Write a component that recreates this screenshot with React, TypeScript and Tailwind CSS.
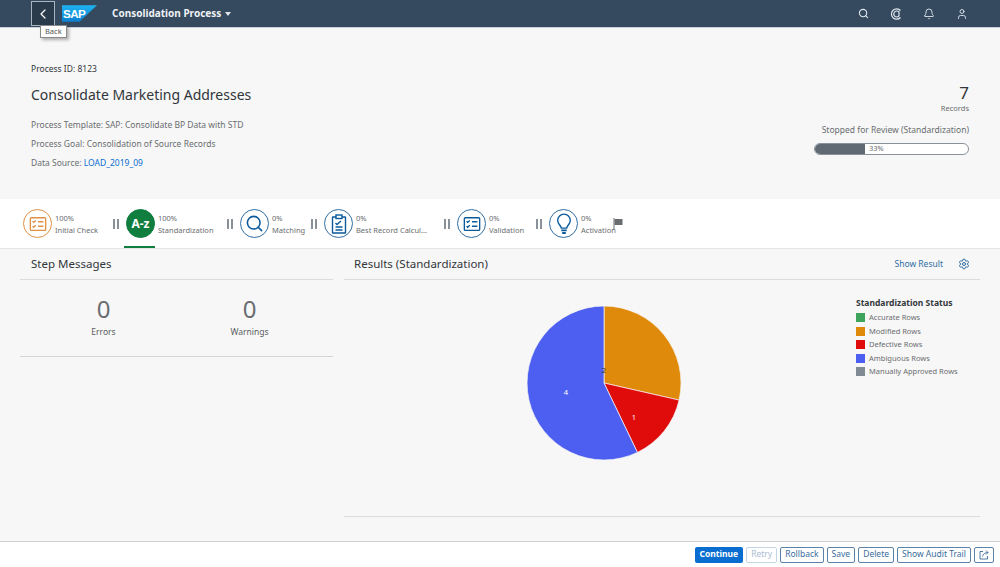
import { Bell, ChevronLeft, Search, Settings, User } from 'lucide-react';

const font = { fontFamily: '"Noto Sans", "Open Sans", sans-serif' };

type Step = { pct: string; label: string; icon: React.ReactNode; active?: boolean; done?: boolean; w: string };

function IconCheckList({ color }: { color: string }) {
  return (
    <svg viewBox="0 0 20 20" className="h-[18px] w-[18px]" fill="none" stroke={color} strokeWidth="1.5">
      <rect x="1.5" y="3" width="17" height="14" rx="1" />
      <path d="M4 7l1.2 1.2L7.5 6M4 12.5l1.2 1.2 2.3-2.2M10 7.5h6M10 12.5h6" />
    </svg>
  );
}

function IconClipboard() {
  return (
    <svg viewBox="0 0 20 20" className="h-[20px] w-[20px]" fill="none" stroke="#0a5a9c" strokeWidth="1.4">
      <rect x="3.5" y="3" width="13" height="16" rx="0.5" />
      <rect x="7" y="1" width="6" height="3.5" fill="#fff" />
      <path d="M6.5 9l1.5 1.5L12 7M6.5 13h7M6.5 16h7" />
    </svg>
  );
}

function IconBulb() {
  return (
    <svg viewBox="0 0 20 24" className="h-[22px] w-[18px]" fill="none" stroke="#0a5a9c" strokeWidth="1.5">
      <path d="M7 16.5C6.5 13.5 3 12 3 8a7 7 0 0 1 14 0c0 4-3.500 5.500-4 8.500z" />
      <path d="M7 19h6M8 22h4" strokeWidth="2" />
    </svg>
  );
}

const steps: Step[] = [
  { pct: '100%', label: 'Initial Check', done: true, w: 'w-[83px]', icon: <IconCheckList color="#e09146" /> },
  { pct: '100%', label: 'Standardization', active: true, w: 'w-[94px]', icon: <span className="text-[12px] font-bold text-white">A-z</span> },
  { pct: '0%', label: 'Matching', w: 'w-[64px]', icon: <Search size={19} color="#0a5a9c" strokeWidth={2} /> },
  { pct: '0%', label: 'Best Record Calcul...', w: 'w-[113px]', icon: <IconClipboard /> },
  { pct: '0%', label: 'Validation', w: 'w-[72px]', icon: <IconCheckList color="#0a5a9c" /> },
  { pct: '0%', label: 'Activation', w: 'w-[63px]', icon: <IconBulb /> },
];

function StepItem({ step }: { step: Step }) {
  const ring = step.active
    ? 'border-[#107e3e] bg-[#107e3e]'
    : step.done
      ? 'border-[#e09146]'
      : 'border-[#2f6da3]';
  return (
    <div className={`relative flex h-full shrink-0 items-center gap-[3px] ${step.w}`}>
      <div className={`flex h-[29px] w-[29px] shrink-0 items-center justify-center rounded-full border ${ring}`}>
        {step.icon}
      </div>
      <div className="whitespace-nowrap pt-px text-[7.5px] leading-[12px] text-[#6a6d70]">
        <p>{step.pct}</p>
        <p>{step.label}</p>
      </div>
      {step.active && <span className="absolute bottom-0 left-[-2px] h-[2px] w-[31px] bg-[#107e3e]" />}
    </div>
  );
}

function Pause() {
  return (
    <div className="flex w-[20px] shrink-0 justify-center gap-[2px]">
      <span className="h-[10px] w-[2px] bg-[#89919a]" />
      <span className="h-[10px] w-[2px] bg-[#89919a]" />
    </div>
  );
}

function Pie() {
  return (
    <svg viewBox="0 0 156 156" className="h-[156px] w-[156px]">
      <path d="M78 78V1A77 77 0 0 1 153.100 95.100Z" fill="#e08a0c" stroke="#f7f7f7" strokeWidth="0.7" />
      <path d="M78 78L153.100 95.100A77 77 0 0 1 111.400 147.400Z" fill="#e00b0b" stroke="#f7f7f7" strokeWidth="0.7" />
      <path d="M78 78L111.400 147.400A77 77 0 1 1 78 1Z" fill="#4d5ff0" stroke="#f7f7f7" strokeWidth="0.7" />
      <text x="78" y="68" textAnchor="middle" fontSize="7.500" fill="#333">2</text>
      <text x="108" y="115" textAnchor="middle" fontSize="7.500" fill="#fff">1</text>
      <text x="40" y="90" textAnchor="middle" fontSize="7.500" fill="#fff">4</text>
    </svg>
  );
}

const legend = [
  { label: 'Accurate Rows', color: 'bg-[#3fa45b]' },
  { label: 'Modified Rows', color: 'bg-[#e08a0c]' },
  { label: 'Defective Rows', color: 'bg-[#e00b0b]' },
  { label: 'Ambiguous Rows', color: 'bg-[#4d5ff0]' },
  { label: 'Manually Approved Rows', color: 'bg-[#7f8a94]' },
];

const buttons = ['Rollback', 'Save', 'Delete', 'Show Audit Trail'];

export default function App() {
  return (
    <div className="flex h-[567px] w-[1000px] flex-col overflow-hidden bg-[#f7f7f7]" style={font}>
      <header className="flex h-[28px] shrink-0 items-center border-b border-b-[#c9d0d8] bg-[#354a5f] pl-[31px] pr-[32px]">
        <div className="relative mr-[7px] flex h-[25px] w-[24px] items-center justify-center border border-[#aab4bf] bg-[#2a3b4c]">
          <ChevronLeft size={16} color="#fff" strokeWidth={1.8} />
          <span className="absolute left-[8px] top-[23px] z-10 border border-[#8a8a8a] bg-white px-[4px] text-[7.5px] leading-[11px] text-[#555] shadow-[2px_2px_3px_rgba(0,0,0,0.3)]">
            Back
          </span>
        </div>
        <svg viewBox="0 0 36 17" className="h-[17px] w-[35px]">
          <defs>
            <linearGradient id="sapg" x1="0" y1="0" x2="0" y2="1">
              <stop offset="0" stopColor="#1fb4f2" />
              <stop offset="1" stopColor="#0a7fd0" />
            </linearGradient>
          </defs>
          <path d="M0 0H36L18 17H0Z" fill="url(#sapg)" />
          <text x="1" y="13" fontSize="12" fontWeight="800" fill="#fff" fontFamily="Liberation Sans" letterSpacing="-0.6">SAP</text>
        </svg>
        <span className="ml-[15px] text-[10px] font-bold text-[#eef1f4]">Consolidation Process</span>
        <span className="ml-[4px] mt-px h-0 w-0 border-x-[3.5px] border-t-[4px] border-x-transparent border-t-[#dfe4e9]" />
        <div className="ml-auto flex items-center gap-[21px] text-[#dfe6ee]">
          <Search size={11} strokeWidth={2.4} />
          <svg viewBox="0 0 12 12" className="h-[12px] w-[12px]" fill="none" stroke="currentColor" strokeWidth="1.2">
            <path d="M10.500 9.500A5.200 5.200 0 1 1 10.500 2.500" />
            <path d="M9 8A3 3 0 1 1 9 4V8" />
          </svg>
          <Bell size={12} strokeWidth={1.8} />
          <User size={12} strokeWidth={1.8} />
        </div>
      </header>

      <section className="flex h-[171px] shrink-0 justify-between pl-[31px] pr-[31px] pt-[35px]">
        <div>
          <p className="text-[8.5px] leading-[12px] text-[#32363a]">Process ID: 8123</p>
          <h1 className="mt-[10px] text-[14px] leading-[20px] text-[#32363a]">Consolidate Marketing Addresses</h1>
          <div className="mt-[14px] space-y-[7px] text-[8.5px] leading-[12px] text-[#6a6d70]">
            <p>Process Template: SAP: Consolidate BP Data with STD</p>
            <p>Process Goal: Consolidation of Source Records</p>
            <p>
              Data Source: <span className="text-[#0a6ed1]">LOAD_2019_09</span>
            </p>
          </div>
        </div>
        <div className="flex flex-col items-end pt-[20px]">
          <p className="text-[17px] leading-[20px] text-[#32363a]">7</p>
          <p className="text-[7.5px] leading-[10px] text-[#6a6d70]">Records</p>
          <p className="mt-[11px] text-[8.5px] leading-[12px] text-[#6a6d70]">Stopped for Review (Standardization)</p>
          <div className="mt-[7px] flex h-[12px] w-[155px] items-center overflow-hidden rounded-full border border-[#89919a] bg-white">
            <div className="h-full w-[50px] bg-[#5f6a74]" />
            <span className="ml-[4px] text-[7.5px] text-[#6a6d70]">33%</span>
          </div>
        </div>
      </section>

      <nav className="flex h-[50px] shrink-0 items-center border-b border-b-[#e5e5e5] bg-white pl-[23px]">
        {steps.map((step) => (
          <div key={step.label} className="flex h-full items-center">
            <StepItem step={step} />
            {step.label !== 'Activation' && <Pause />}
          </div>
        ))}
        <svg viewBox="0 0 10 12" className="ml-[1px] h-[12px] w-[10px]">
          <path d="M1 0v12" stroke="#6a6d70" strokeWidth="1" />
          <path d="M1.500 1h8v6h-8z" fill="#6a6d70" />
        </svg>
      </nav>

      <main className="flex min-h-0 flex-1 gap-[11px] pl-[20px] pr-[20px]">
        <div className="w-[313px] shrink-0">
          <h2 className="flex h-[31px] items-center border-b border-b-[#dcdcdc] pl-[11px] text-[11.500px] text-[#32363a]">Step Messages</h2>
          <div className="flex h-[77px] border-b border-b-[#d5d5d5] text-center">
            <div className="w-[167px] pt-[15px]">
              <p className="text-[24px] leading-[28px] text-[#6a6d70]">0</p>
              <p className="mt-[3px] text-[8.500px] leading-[12px] text-[#5a5d60]">Errors</p>
            </div>
            <div className="w-[125px] pt-[15px]">
              <p className="text-[24px] leading-[28px] text-[#6a6d70]">0</p>
              <p className="mt-[3px] text-[8.500px] leading-[12px] text-[#5a5d60]">Warnings</p>
            </div>
          </div>
        </div>
        <div className="flex min-w-0 flex-1 flex-col">
          <div className="flex h-[31px] shrink-0 items-center border-b border-b-[#dcdcdc] pl-[10px] pr-[10px]">
            <h2 className="text-[11.500px] text-[#32363a]">Results (Standardization)</h2>
            <span className="ml-auto text-[8.500px] text-[#2f6da3]">Show Result</span>
            <Settings size={12} color="#2f6da3" className="ml-[15px]" />
          </div>
          <div className="flex h-[237px] shrink-0 border-b border-b-[#dcdcdc]">
            <div className="ml-[182px] mt-[25px]">
              <Pie />
            </div>
            <div className="ml-[174px] mt-[17px]">
              <p className="text-[8.500px] font-bold leading-[12px] text-[#32363a]">Standardization Status</p>
              <ul className="mt-[2px]">
                {legend.map((item) => (
                  <li key={item.label} className="flex h-[13.500px] items-center gap-[4px] whitespace-nowrap text-[7.500px] text-[#6a6d70]">
                    <span className={`h-[9px] w-[9px] ${item.color}`} />
                    {item.label}
                  </li>
                ))}
              </ul>
            </div>
          </div>
        </div>
      </main>

      <footer className="flex h-[26px] shrink-0 items-center justify-end gap-[3px] border-t border-t-[#d0d0d0] bg-white pr-[6px] text-[8.500px]">
        <button type="button" className="h-[16px] rounded-[2px] bg-[#0a6ed1] px-[5px] font-bold text-white">Continue</button>
        <button type="button" className="h-[16px] rounded-[2px] border border-[#c5d6e6] px-[4px] text-[#a9bccf]">Retry</button>
        {buttons.map((b) => (
          <button key={b} type="button" className="h-[16px] rounded-[2px] border border-[#5b82a8] px-[4px] text-[#3a6d9c]">{b}</button>
        ))}
        <button type="button" className="flex h-[16px] w-[20px] items-center justify-center rounded-[2px] border border-[#5b82a8]">
          <svg viewBox="0 0 10 10" className="h-[10px] w-[10px]" fill="none" stroke="#3a6d9c" strokeWidth="0.9">
            <path d="M4 1.500H1v7.500h7.500V6M3.500 6.500C4 4 6 2.500 9 2.500M7 .5l2 2-2 2" />
          </svg>
        </button>
      </footer>
    </div>
  );
}
